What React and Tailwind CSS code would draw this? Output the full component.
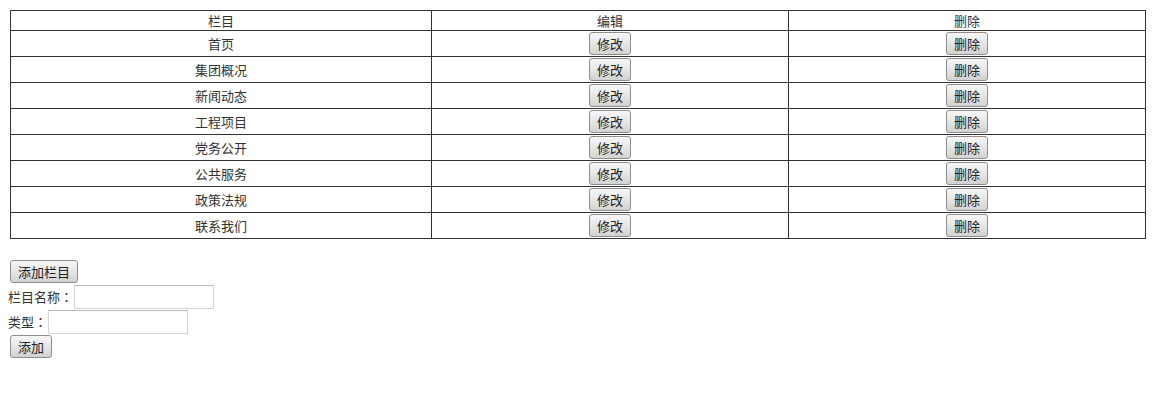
import React from 'react';

const columns = ['首页', '集团概况', '新闻动态', '工程项目', '党务公开', '公共服务', '政策法规', '联系我们'];

function Btn({ children, className = '' }) {
  return (
    <button
      type="button"
      className={`h-[23px] px-[7px] border border-[#8e8e8e] rounded-[3px] bg-gradient-to-b from-[#f6f6f6] via-[#e6e6e6] to-[#d2d2d2] text-[13px] leading-none text-[#222] ${className}`}
    >
      {children}
    </button>
  );
}

function Colon() {
  return <span style={{ fontFamily: '"Noto Sans CJK TC", sans-serif' }}>：</span>;
}

export default function App() {
  return (
    <div
      className="w-[1155px] h-[398px] bg-white pt-[10px] text-[13px] text-[#333]"
      style={{ fontFamily: '"Noto Sans CJK SC", "Liberation Sans", sans-serif' }}
    >
      <table className="ml-[10px] w-[1136px] border-collapse border border-[#333]">
        <thead>
          <tr className="h-[20px]">
            <td className="w-[421px] border border-[#333] text-center leading-none">栏目</td>
            <td className="w-[357px] border border-[#333] text-center leading-none">编辑</td>
            <td className="border border-[#333] text-center leading-none">删除</td>
          </tr>
        </thead>
        <tbody>
          {columns.map((name) => (
            <tr key={name} className="h-[26px]">
              <td className="border border-[#333] text-center leading-none">{name}</td>
              <td className="border border-[#333] text-center leading-none">
                <Btn>修改</Btn>
              </td>
              <td className="border border-[#333] text-center leading-none">
                <Btn>删除</Btn>
              </td>
            </tr>
          ))}
        </tbody>
      </table>

      <div className="mt-[21px] pl-[8px] flex flex-col items-start">
        <Btn className="ml-[2px]">添加栏目</Btn>
        <div className="flex items-center h-[25px] mt-px">
          <span>栏目名称<Colon /></span>
          <input type="text" className="ml-px w-[140px] h-[24px] border border-[#d4d4d4] border-t-[#bababa] bg-white outline-none" />
        </div>
        <div className="flex items-center h-[25px]">
          <span>类型<Colon /></span>
          <input type="text" className="ml-px w-[140px] h-[24px] border border-[#d4d4d4] border-t-[#bababa] bg-white outline-none" />
        </div>
        <Btn className="ml-[2px] mt-px">添加</Btn>
      </div>
    </div>
  );
}
